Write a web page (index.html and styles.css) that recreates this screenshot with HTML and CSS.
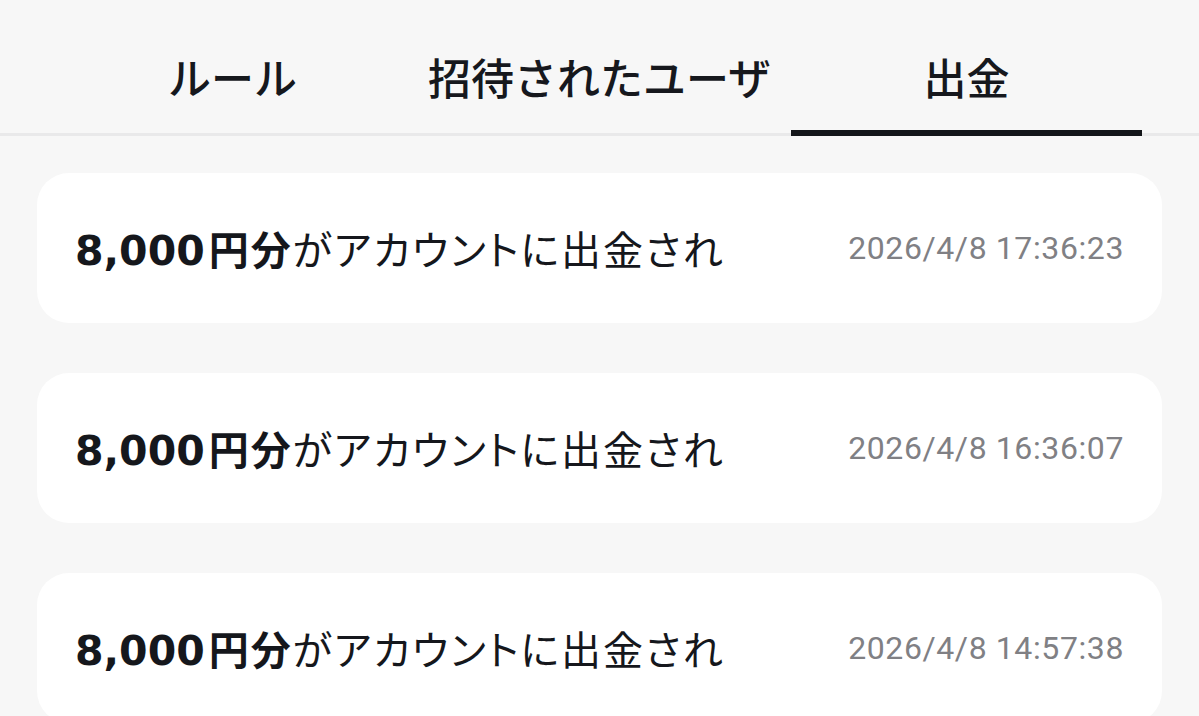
FILE: index.html
```html
<!DOCTYPE html>
<html lang="ja">
<head>
<meta charset="utf-8">
<title>出金</title>
<link rel="stylesheet" href="styles.css">
</head>
<body>
  <nav class="tabs">
    <div class="tab">ルール</div>
    <div class="tab">招待されたユーザ</div>
    <div class="tab tab-active">出金</div>
  </nav>
  <main class="list">
    <div class="card">
      <div class="msg"><span class="amount"><span class="num">8,000</span>円分</span>がアカウントに出金され</div>
      <div class="date">2026/4/8 17:36:23</div>
    </div>
    <div class="card">
      <div class="msg"><span class="amount"><span class="num">8,000</span>円分</span>がアカウントに出金され</div>
      <div class="date">2026/4/8 16:36:07</div>
    </div>
    <div class="card">
      <div class="msg"><span class="amount"><span class="num">8,000</span>円分</span>がアカウントに出金され</div>
      <div class="date">2026/4/8 14:57:38</div>
    </div>
  </main>
</body>
</html>
```

FILE: styles.css
```css
html, body {
  margin: 0;
  padding: 0;
}
body {
  background: #f7f7f7;
  font-family: "Noto Sans CJK JP", "Noto Sans", sans-serif;
  color: #16181d;
  overflow: hidden;
}
.tabs {
  display: flex;
  padding: 0 49px;
  border-bottom: 3px solid #e9e9ea;
}
.tab {
  flex: 1;
  height: 133px;
  box-sizing: border-box;
  padding-top: 18px;
  display: flex;
  align-items: center;
  justify-content: center;
  font-size: 43px;
  font-weight: 500;
  position: relative;
}
.tab-active::after {
  content: "";
  position: absolute;
  left: 8px;
  right: 8px;
  bottom: -3px;
  height: 6px;
  background: #14161a;
}
.list {
  display: flex;
  flex-direction: column;
  gap: 50px;
  padding: 37px 37px 0;
}
.card {
  height: 150px;
  flex: none;
  background: #ffffff;
  border-radius: 32px;
  display: flex;
  align-items: center;
  justify-content: space-between;
  padding: 0 38px 0 38px;
}
.msg {
  font-size: 40px;
  font-feature-settings: "palt";
  letter-spacing: 2px;
  white-space: nowrap;
  color: #15171c;
}
.amount {
  font-weight: 700;
}
.num {
  font-family: "DejaVu Sans", sans-serif;
  font-size: 41px;
  letter-spacing: 0;
  margin-right: 4px;
}
.date {
  font-family: Roboto, sans-serif;
  font-size: 32px;
  letter-spacing: 0.6px;
  color: #808084;
  white-space: nowrap;
}
```
